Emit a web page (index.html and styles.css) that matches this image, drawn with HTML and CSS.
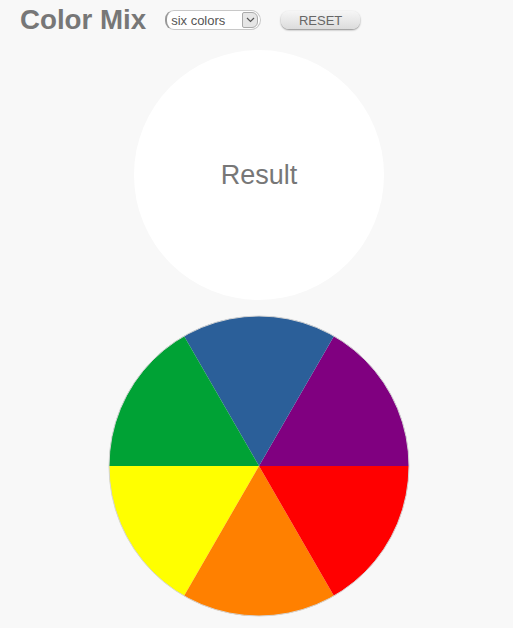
FILE: index.html
```html
<!DOCTYPE html>
<html>
<head>
<meta charset="utf-8">
<link rel="stylesheet" href="styles.css">
</head>
<body>
<header class="bar">
  <h1 class="title">Color Mix</h1>
  <div class="picker">
    <select class="picker-select">
      <option>six colors</option>
      <option>three colors</option>
    </select>
    <span class="picker-arrow"><svg width="9" height="6" viewBox="0 0 9 6"><path d="M1 1 L4.5 4.5 L8 1" fill="none" stroke="#555" stroke-width="1.2"/></svg></span>
  </div>
  <button class="reset">RESET</button>
</header>
<main class="stage">
  <div class="result"><span>Result</span></div>
  <svg class="wheel" width="302" height="302" viewBox="-151 -151 302 302">
    <path d="M0 0 L150 0 A150 150 0 0 0 75 -129.9 Z" fill="#800080"/>
    <path d="M0 0 L75 -129.9 A150 150 0 0 0 -75 -129.9 Z" fill="#2b5f99"/>
    <path d="M0 0 L-75 -129.9 A150 150 0 0 0 -150 0 Z" fill="#00a235"/>
    <path d="M0 0 L-150 0 A150 150 0 0 0 -75 129.9 Z" fill="#ffff00"/>
    <path d="M0 0 L-75 129.9 A150 150 0 0 0 75 129.9 Z" fill="#ff8000"/>
    <path d="M0 0 L75 129.9 A150 150 0 0 0 150 0 Z" fill="#ff0000"/>
    <circle cx="0" cy="0" r="150" fill="none" stroke="#d4d4d4" stroke-width="1"/>
  </svg>
</main>
</body>
</html>
```
FILE: styles.css
```css
html, body {
  margin: 0;
  padding: 0;
  background: #f8f8f8;
  font-family: "Liberation Sans", Arial, sans-serif;
}
.bar {
  display: flex;
  align-items: center;
  padding: 4px 0 0 20px;
  height: 36px;
  box-sizing: border-box;
}
.title {
  margin: 0;
  font-size: 27.7px;
  font-weight: bold;
  color: #777;
  line-height: 32px;
}
.picker {
  position: relative;
  margin-left: 19px;
  width: 96px;
  height: 20px;
}
.picker-select {
  appearance: none;
  -webkit-appearance: none;
  width: 96px;
  height: 20px;
  box-sizing: border-box;
  margin: 0;
  padding: 0 0 0 4px;
  border: 1px solid #c8c8c8;
  border-left: 2px solid #999;
  border-radius: 9px 10px 10px 9px;
  background: #fff;
  font-family: "Liberation Sans", Arial, sans-serif;
  font-size: 13px;
  color: #555;
  outline: none;
}
.picker-arrow {
  position: absolute;
  top: 2px;
  right: 3px;
  width: 16px;
  height: 16px;
  box-sizing: border-box;
  border: 1px solid #aaa;
  border-radius: 2px 6px 6px 2px;
  background: #e6e6e6;
  display: flex;
  align-items: center;
  justify-content: center;
  pointer-events: none;
}
.reset {
  margin-left: 20px;
  width: 79px;
  height: 18px;
  padding: 0;
  border: none;
  border-radius: 8px;
  background: linear-gradient(#f6f6f6, #dcdcdc);
  box-shadow: 0 1px 2px rgba(0,0,0,0.45);
  font-family: "Liberation Sans", Arial, sans-serif;
  font-size: 13px;
  color: #666;
}
.stage {
  display: flex;
  flex-direction: column;
  align-items: center;
  padding: 14px 0 0 5px;
}
.result {
  width: 250px;
  height: 250px;
  border-radius: 50%;
  background: #fff;
  display: flex;
  align-items: center;
  justify-content: center;
}
.result span {
  font-size: 27px;
  color: #777;
}
.wheel {
  display: block;
  margin-top: 15px;
}
```
